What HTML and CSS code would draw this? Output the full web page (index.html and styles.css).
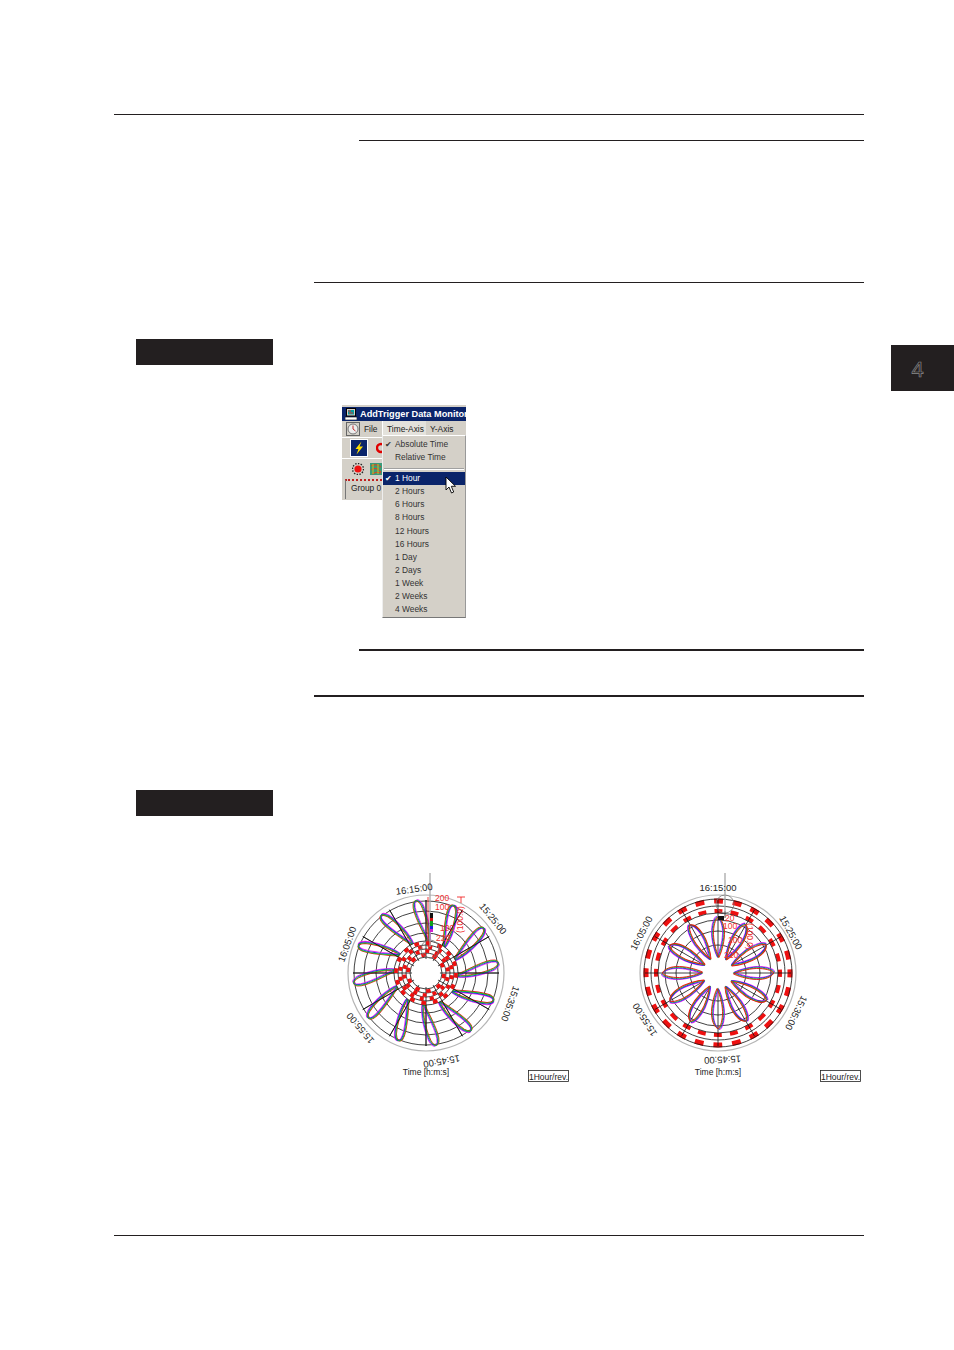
FILE: index.html
```html
<!DOCTYPE html>
<html lang="en">
<head>
<meta charset="utf-8">
<title>Time axis</title>
<link rel="stylesheet" href="styles.css">
</head>
<body>
<div class="page">
  <div class="side-tab"><span class="side-num">4</span></div>

  <div class="rule rule-full"></div>
  <div class="rule rule-note note-top"></div>
  <div class="rule rule-sec sec-one"></div>
  <div class="label-bar bar-one"></div>

  <div class="window">
    <div class="titlebar">
      <svg class="title-icon" viewBox="0 0 12 12"><rect x="1.5" y="0.5" width="9" height="7.5" fill="#d4d0c8" stroke="#000"/><rect x="3" y="2" width="6" height="4.5" fill="#00a0a0"/><path d="M3 3h3M4 5h4" stroke="#e03030"/><rect x="0" y="9" width="12" height="3" fill="#fff" stroke="#000" stroke-width=".6"/></svg>
      <span class="title-text">AddTrigger Data Monitor</span>
    </div>
    <div class="menubar">
      <svg class="file-icon" viewBox="0 0 14 14"><rect x=".5" y=".5" width="13" height="13" fill="#d4d0c8" stroke="#666"/><circle cx="7" cy="7" r="5" fill="#eee" stroke="#777"/><path d="M7 3.5V7L9.5 9" stroke="#c03030" fill="none"/></svg>
      <span class="menu-file">File</span>
      <span class="menu-time">Time-Axis</span>
      <span class="menu-y">Y-Axis</span>
    </div>
    <div class="toolbar tool-one">
      <svg class="bolt-icon" viewBox="0 0 16 16"><rect width="16" height="16" fill="#0a246a"/><path d="M10.5 1.5 4.5 9h3l-2 5.5L12 6.5H8.5z" fill="#ffe000"/></svg>
      <svg class="stop-icon" viewBox="0 0 10 12"><circle cx="5" cy="6" r="4" fill="none" stroke="#e00000" stroke-width="2.4"/></svg>
    </div>
    <div class="toolbar tool-two">
      <svg class="bomb-icon" viewBox="0 0 12 12"><circle cx="6" cy="6" r="5.5" fill="none" stroke="#222" stroke-width="1.4" stroke-dasharray="1.4 1.4"/><circle cx="6" cy="6" r="3.6" fill="#ee1010"/></svg>
      <svg class="grid-icon" viewBox="0 0 12 12"><rect width="12" height="12" fill="#3a9a78"/><path d="M1 3q5-3 10 1M1 7q5-4 10 2M2 11q4-3 9-1" stroke="#e04020" fill="none"/><path d="M3 1v10M8 1v10" stroke="#d0c020"/></svg>
    </div>
    <div class="tab-row"><div class="tab">Group 0</div></div>

    <div class="menu">
      <div class="menu-row"><span class="check">✔</span>Absolute Time</div>
      <div class="menu-row">Relative Time</div>
      <div class="menu-sep"></div>
      <div class="menu-row is-active"><span class="check">✔</span>1 Hour</div>
      <div class="menu-row">2 Hours</div>
      <div class="menu-row">6 Hours</div>
      <div class="menu-row">8 Hours</div>
      <div class="menu-row">12 Hours</div>
      <div class="menu-row">16 Hours</div>
      <div class="menu-row">1 Day</div>
      <div class="menu-row">2 Days</div>
      <div class="menu-row">1 Week</div>
      <div class="menu-row">2 Weeks</div>
      <div class="menu-row">4 Weeks</div>
    </div>
    <svg class="cursor" viewBox="0 0 11 18"><path d="M1 1v13l3-3 2.5 6 2.2-1L6.300 10.300H10.500z" fill="#fff" stroke="#000" stroke-width=".9"/></svg>
  </div>

  <div class="rule rule-note-thick note-bottom"></div>
  <div class="rule rule-sec-thick sec-two"></div>
  <div class="label-bar bar-two"></div>

  <div class="charts">
    <svg class="chart" viewBox="0 0 240 225">
      <defs>
        <path id="lean" d="M3,-30C-1,-40 -13,-60 -12,-69C-11,-75 -7,-73 -4,-68C0,-60 5,-42 3,-30Z"/>
        <path id="straight" d="M0,-16C-3,-22 -6,-34 -5.500,-42C-5,-50 -3,-55 -1,-56C2,-55 5,-50 5.500,-42C6,-34 3,-22 0,-16Z"/>
        <g id="petal1">
          <use href="#lean" class="p-red" x="-1" y=".4"/>
          <use href="#lean" class="p-mag" x="1" y="-.6"/>
          <use href="#lean" class="p-blu" x=".4" y="0"/>
          <use href="#lean" class="p-grn" x="-.4" y=".2"/>
        </g>
        <g id="petal2">
          <use href="#straight" class="p-mag" x="-1" y="-.5"/>
          <use href="#straight" class="p-blu" x="-.4" y="0"/>
          <use href="#straight" class="p-grn" x=".4" y=".2"/>
          <use href="#straight" class="p-red" x="1" y=".4"/>
        </g>
        <g id="spokes">
          <path class="grid" d="M0,-73V73"/>
          <path class="grid" d="M-36.500,-63.200L36.500,63.200"/>
          <path class="grid" d="M-63.200,-36.500L63.200,36.500"/>
          <path class="grid" d="M-73,0H73"/>
          <path class="grid" d="M-63.200,36.500L63.200,-36.500"/>
          <path class="grid" d="M-36.500,63.200L36.500,-63.200"/>
        </g>
      </defs>
      <g transform="translate(91 108)">
        <circle class="outer" r="78"/>
        <use href="#spokes"/>
        <circle class="grid" r="72"/><circle class="grid" r="62"/><circle class="grid" r="50"/><circle class="grid" r="40"/>
        <use href="#petal1"/>
        <use href="#petal1" transform="rotate(30)"/>
        <use href="#petal1" transform="rotate(60)"/>
        <use href="#petal1" transform="rotate(90)"/>
        <use href="#petal1" transform="rotate(120)"/>
        <use href="#petal1" transform="rotate(150)"/>
        <use href="#petal1" transform="rotate(180)"/>
        <use href="#petal1" transform="rotate(210)"/>
        <use href="#petal1" transform="rotate(240)"/>
        <use href="#petal1" transform="rotate(270)"/>
        <use href="#petal1" transform="rotate(300)"/>
        <use href="#petal1" transform="rotate(330)"/>
        <circle class="inner-bg" r="32"/>
        <use href="#spokes"/>
        <circle class="grid" r="32"/><circle class="grid" r="28"/><circle class="grid" r="24"/><circle class="grid" r="20"/><circle class="grid" r="16"/>
        <circle class="dots" r="30" pathLength="48" stroke-dasharray="1.200 1.800"/>
        <circle class="dots" r="26" pathLength="48" stroke-dasharray="1.200 1.800" transform="rotate(5)"/>
        <circle class="dots" r="22" pathLength="42" stroke-dasharray="1.200 1.800" transform="rotate(11)"/>
        <circle class="dots" r="18" pathLength="30" stroke-dasharray="1.200 1.800" transform="rotate(3)"/>
        <circle class="hole" r="14"/>
        <circle class="cursor-ring" cx="4" cy="-24" r="9"/>
        <path class="red-line" d="M2,-76V-26M35,-76V-70M31,-76H39"/>
        <path class="pointer" d="M4,-100V-26"/>
        <rect class="bar-k" x="4" y="-60" width="3" height="5"/>
        <rect class="bar-r" x="4" y="-55" width="3" height="3"/>
        <rect class="bar-g" x="4" y="-52" width="3" height="5"/>
        <rect class="bar-b" x="4" y="-47" width="3" height="3"/>
        <rect class="bar-m" x="4" y="-44" width="3" height="3"/>
        <text class="red-text" x="9" y="-72">200</text>
        <text class="red-text" x="9" y="-63">100</text>
        <text class="red-text" x="14" y="-42">100</text>
        <text class="red-text" x="10" y="-32">220</text>
        <text class="red-text" transform="translate(37 -40) rotate(-90)">(100.0)</text>
        <text class="axis-label" transform="rotate(-8)" y="-81.500">16:15:00</text>
        <text class="axis-label" transform="rotate(51)" y="-83">15:25:00</text>
        <text class="axis-label" transform="rotate(110)" y="-86.500">15:35:00</text>
        <text class="axis-label" transform="rotate(170)" y="-86.500">15:45:00</text>
        <text class="axis-label" transform="rotate(230)" y="-82.500">15:55:00</text>
        <text class="axis-label" transform="rotate(290)" y="-80.500">16:05:00</text>
        <text class="time-label" y="102">Time [h:m:s]</text>
      </g>
      <rect class="rev-box" x="193.500" y="205.500" width="40" height="11"/>
      <text class="rev-text" x="213.500" y="214.500">1Hour/rev.</text>
    </svg>

    <svg class="chart" viewBox="0 0 240 225">
      <g transform="translate(93 108)">
        <circle class="outer" r="78"/>
        <circle class="ring-a" r="72"/>
        <circle class="ring-b" r="62"/>
        <use href="#spokes"/>
        <circle class="grid" r="74"/><circle class="grid" r="67"/><circle class="grid" r="60"/><circle class="grid" r="53"/><circle class="grid" r="42"/><circle class="grid" r="28"/>
        <use href="#petal2"/>
        <use href="#petal2" transform="rotate(30)"/>
        <use href="#petal2" transform="rotate(60)"/>
        <use href="#petal2" transform="rotate(90)"/>
        <use href="#petal2" transform="rotate(120)"/>
        <use href="#petal2" transform="rotate(150)"/>
        <use href="#petal2" transform="rotate(180)"/>
        <use href="#petal2" transform="rotate(210)"/>
        <use href="#petal2" transform="rotate(240)"/>
        <use href="#petal2" transform="rotate(270)"/>
        <use href="#petal2" transform="rotate(300)"/>
        <use href="#petal2" transform="rotate(330)"/>
        <circle class="hole" r="15"/>
        <circle class="cursor-ring" cx="7" cy="-69" r="9"/>
        <path class="pointer" d="M7,-100V-62"/>
        <path class="cursor-stem" d="M7,-62V-55"/>
        <rect class="bar-k" x="0" y="-57" width="6" height="4"/>
        <text class="red-text" x="7" y="-52">20</text>
        <text class="red-text" x="5" y="-44">100</text>
        <text class="red-text" x="10" y="-30">100</text>
        <text class="red-text" x="6" y="-15">220</text>
        <text class="red-text" transform="translate(29 -50) rotate(90)">(100.0)</text>
        <text class="axis-label" y="-82.500">16:15:00</text>
        <text class="axis-label" transform="rotate(61)" y="-80">15:25:00</text>
        <text class="axis-label" transform="rotate(117)" y="-84.500">15:35:00</text>
        <text class="axis-label" transform="rotate(177)" y="-83.500">15:45:00</text>
        <text class="axis-label" transform="rotate(237.500)" y="-83.500">15:55:00</text>
        <text class="axis-label" transform="rotate(297.500)" y="-83">16:05:00</text>
        <text class="time-label" y="102">Time [h:m:s]</text>
      </g>
      <rect class="rev-box" x="195.500" y="205.500" width="40" height="11"/>
      <text class="rev-text" x="215.500" y="214.500">1Hour/rev.</text>
    </svg>
  </div>

  <div class="rule rule-full foot"></div>
</div>
</body>
</html>
```
FILE: styles.css
```css
html, body { margin: 0; padding: 0; background: #fff; }
body { font-family: "Liberation Sans", Arial, sans-serif; color: #000; }
.page { position: relative; width: 954px; height: 1350px; padding-top: 114px; box-sizing: border-box; overflow: hidden; }

.rule { background: #231f20; height: 1px; margin-right: 90px; }
.rule-full { margin-left: 114px; }
.rule-note { margin-left: 359px; }
.rule-sec { margin-left: 314px; }
.rule-note-thick { margin-left: 359px; height: 2px; }
.rule-sec-thick { margin-left: 314px; height: 2px; }
.note-top { margin-top: 25px; }
.sec-one { margin-top: 141px; }
.note-bottom { margin-top: 31px; }
.sec-two { margin-top: 44px; }
.foot { margin-top: 145px; }

.label-bar { background: #231f20; width: 137px; height: 26px; margin-left: 136px; }
.bar-one { margin-top: 56px; }
.bar-two { margin-top: 93px; }

.side-tab { position: absolute; left: 891px; top: 345px; width: 63px; height: 46px; box-sizing: border-box; padding: 3px 10px 0 0; background: #231f20; display: flex; align-items: center; justify-content: center; }
.side-num { font-size: 22px; color: #231f20; -webkit-text-stroke: 0.7px #8a8a8a; }

.window { position: relative; width: 124px; height: 213px; margin: 40px 0 0 342px; font-size: 8.400px; color: #222; }
.titlebar { height: 14px; border-top: 2px solid #d4d0c8; background: #0a246a; color: #fff; display: flex; align-items: center; gap: 3px; padding-left: 3px; overflow: hidden; white-space: nowrap; }
.title-icon { width: 12px; height: 12px; flex: none; }
.title-text { font-weight: 700; font-size: 9.200px; }
.menubar, .toolbar, .tab-row { background: #d4d0c8; }
.menubar { height: 16px; display: flex; align-items: center; padding-left: 4px; white-space: nowrap; }
.file-icon { width: 14px; height: 14px; flex: none; }
.menu-file { margin-left: 4px; width: 18px; }
.menu-time { width: 44px; height: 16px; line-height: 17px; padding-left: 4px; box-sizing: border-box; background: #e4e2dc; border-left: 1px solid #fff; flex: none; }
.menu-y { margin-left: 4px; }
.toolbar { display: flex; align-items: center; border-top: 1px solid #fff; }
.tool-one { height: 20px; padding-left: 9px; gap: 9px; }
.bolt-icon { width: 16px; height: 16px; flex: none; outline: 1px solid #fff; }
.stop-icon { width: 10px; height: 12px; flex: none; }
.tool-two { height: 20px; padding-left: 10px; gap: 6px; }
.bomb-icon, .grid-icon { width: 12px; height: 12px; flex: none; }
.tab-row { height: 21px; padding-left: 3px; }
.tab { width: 37px; height: 20px; box-sizing: border-box; padding: 2px 0 0 5px; border-top: 2px dotted #c02020; border-left: 1px solid #777; background: #d4d0c8; white-space: nowrap; }

.menu { position: absolute; left: 40px; top: 30px; width: 84px; height: 183px; box-sizing: border-box; padding-top: 2px; background: #d4d0c8; border-top: 1px solid #fff; border-bottom: 1px solid #777; border-left: 1px solid #eee; border-right: 1px solid #999; }
.menu-row { position: relative; height: 13.100px; line-height: 13.100px; padding-left: 12px; white-space: nowrap; color: #333; }
.menu-sep { height: 1px; margin: 4px 1px 2px; background: #a0a0a0; border-bottom: 1px solid #fff; }
.is-active { background: #0a246a; color: #fff; }
.check { position: absolute; left: 2px; top: 0; font-size: 8px; }
.cursor { position: absolute; left: 103px; top: 71px; width: 11px; height: 18px; }

.charts { display: flex; gap: 50px; margin: 49px 0 0 335px; }
.chart { width: 240px; height: 225px; flex: none; display: block; }
.chart text { font-family: "Liberation Sans", Arial, sans-serif; }
.outer { fill: #fff; stroke: #b5b5b5; stroke-width: 1.200; }
.grid { fill: none; stroke: #111; stroke-width: 0.800; }
.inner-bg, .hole { fill: #fff; }
.p-red, .p-mag, .p-blu, .p-grn { fill: none; stroke-width: 0.900; }
.p-red { stroke: #f01010; }
.p-mag { stroke: #f020f0; }
.p-blu { stroke: #2020e8; }
.p-grn { stroke: #10c020; }
.dots { fill: none; stroke: #ee1010; stroke-width: 3.600; }
.ring-a { fill: none; stroke: #ee1010; stroke-width: 5; stroke-dasharray: 9 9.850; stroke-dashoffset: 4.500; }
.ring-b { fill: none; stroke: #ee1010; stroke-width: 4; stroke-dasharray: 8 8.230; stroke-dashoffset: 4; }
.cursor-ring { fill: none; stroke: #777; stroke-width: 0.800; }
.cursor-stem { stroke: #222; stroke-width: 0.800; }
.pointer { stroke: #a8a8a8; stroke-width: 1.300; }
.red-line { stroke: #f01010; stroke-width: 0.800; fill: none; }
.bar-k { fill: #111; }
.bar-r { fill: #d01010; }
.bar-g { fill: #10a020; }
.bar-b { fill: #2020e0; }
.bar-m { fill: #d020d0; }
.red-text { fill: #f03030; font-size: 8.500px; }
.axis-label { fill: #222; font-size: 9.500px; text-anchor: middle; }
.time-label { fill: #222; font-size: 8.500px; text-anchor: middle; }
.rev-box { fill: #fff; stroke: #222; stroke-width: 0.800; }
.rev-text { fill: #222; font-size: 8.500px; text-anchor: middle; }
```
